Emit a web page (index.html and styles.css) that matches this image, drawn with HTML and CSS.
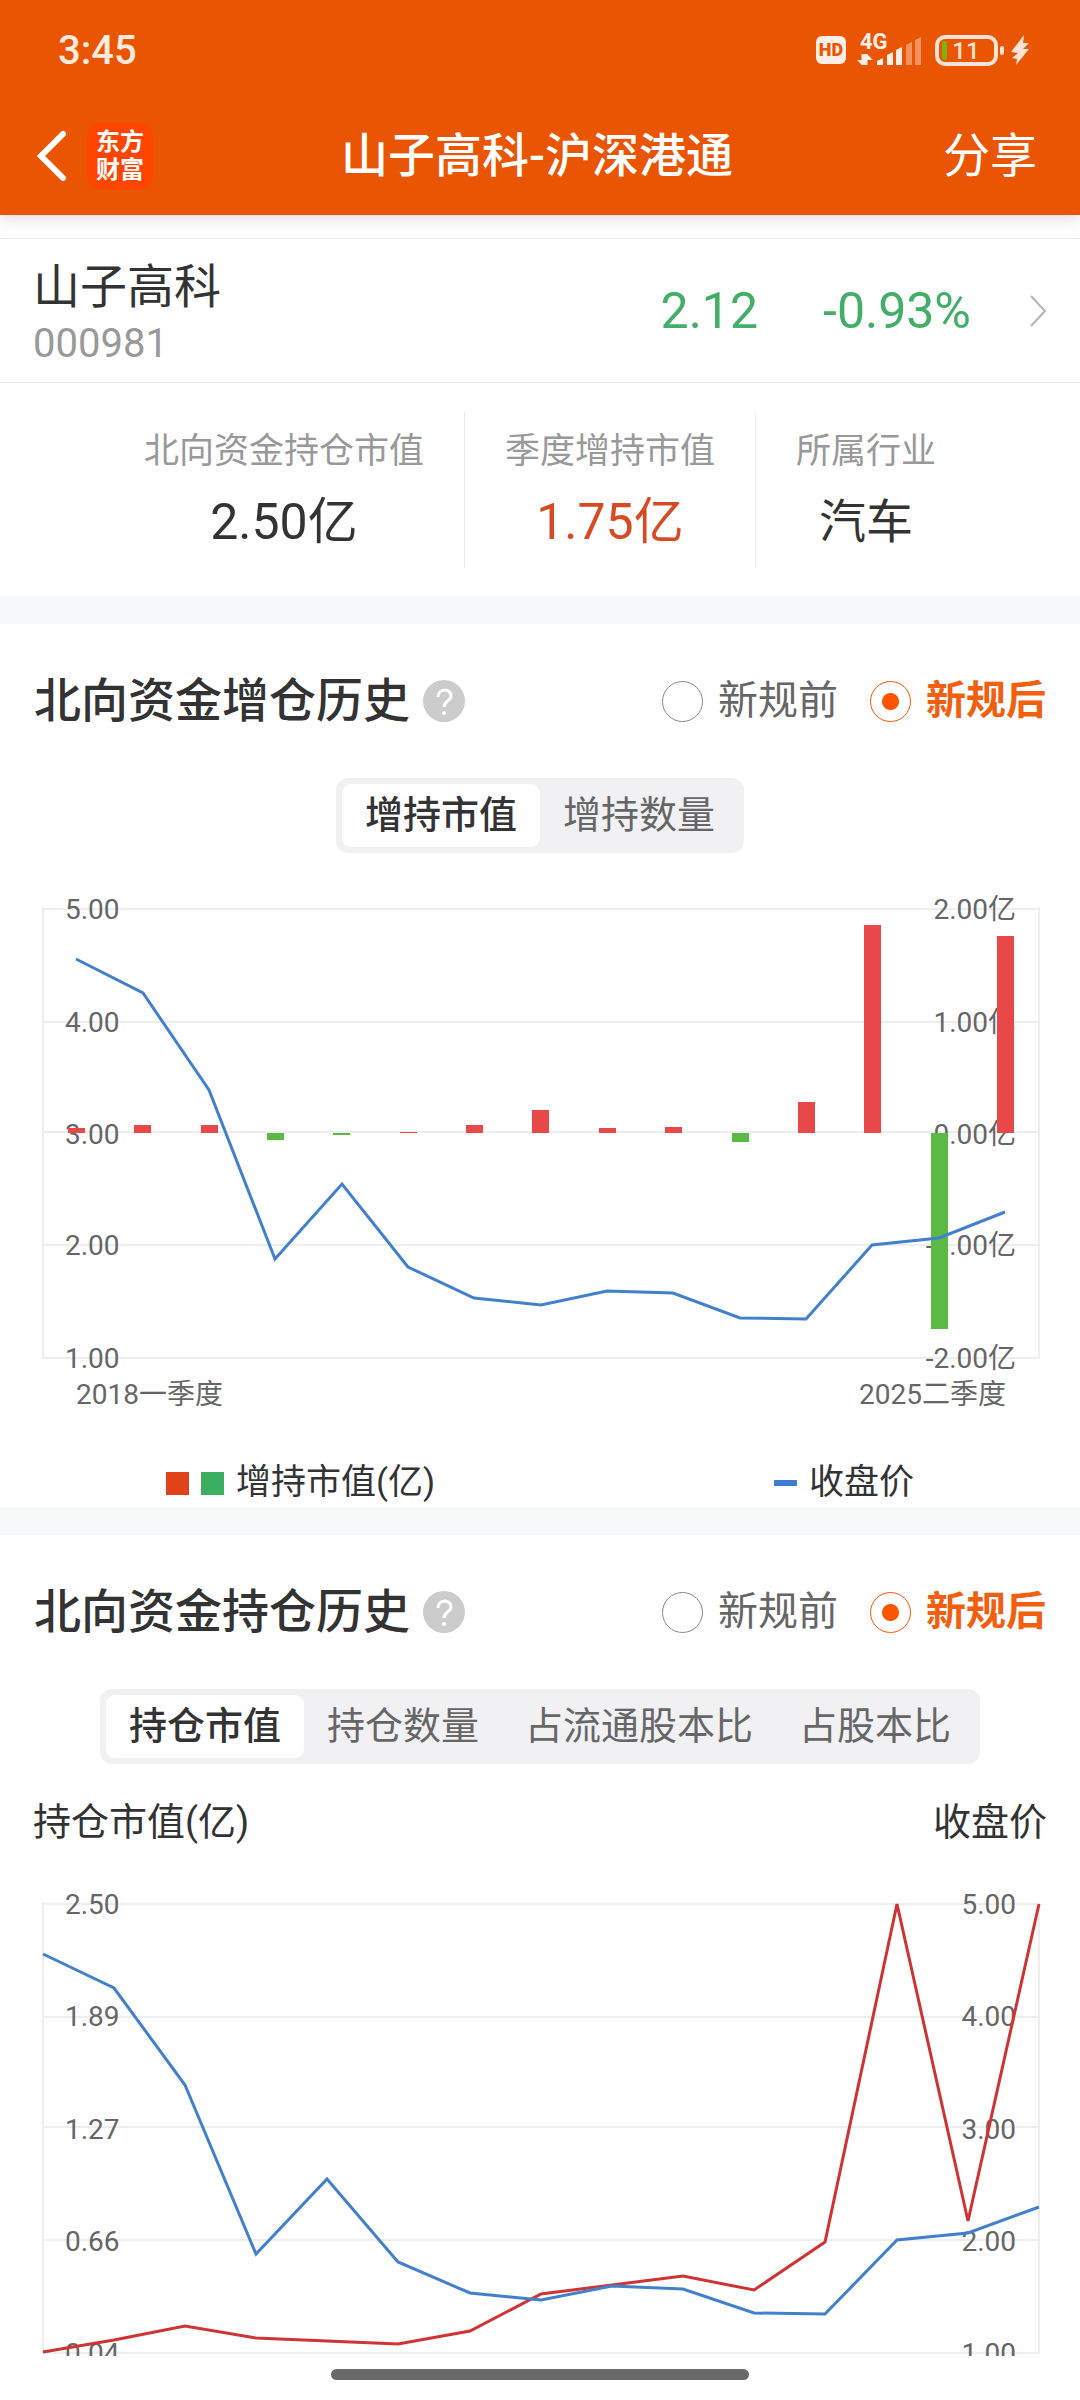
FILE: index.html
```html
<!DOCTYPE html>
<html lang="zh-CN">

<head>
  <meta charset="UTF-8">
  <meta name="viewport" content="width=device-width, initial-scale=1">
  <title>山子高科-沪深港通</title>
  <link rel="stylesheet" href="styles.css">
</head>

<body>
  <header class="top">
    <div class="status-bar">
      <span class="time">3:45</span>
      <svg class="status-icons" width="216" height="52" viewBox="815 24 216 52" aria-hidden="true">
        <rect x="816" y="36" width="30" height="28" rx="6" fill="#ffeee6" />
        <text x="831" y="56" class="hd">HD</text>
        <text x="860" y="49" class="net">4G</text>
        <path d="M863 54v11M866 65V54" fill="none" stroke="#ffeee6" stroke-width="3" />
        <path d="M857 60h5v5zM867 54l6 6h-6z" fill="#ffeee6" />
        <g fill="#ffeee6">
          <path d="M877 61l6-3v7h-6zM887 55l6-3v13h-6zM896 50l6-3v18h-6z" />
          <path d="M906 45l6-3v23h-6zM915 40l6-3v28h-6z" opacity=".4" />
        </g>
        <rect x="937" y="37" width="59" height="27" rx="8" fill="none" stroke="#ffe3d2" stroke-width="4" />
        <rect x="1000" y="46" width="4" height="9" rx="2" fill="#ffe3d2" />
        <rect x="942" y="41" width="5" height="19" rx="2" fill="#7fb010" />
        <text x="966" y="59" class="level">11</text>
        <path d="M1024 35l-13 17 7 1-6 5 5 1-1 6 13-16h-6l6-6h-6z" fill="#ffe3d6" />
      </svg>
    </div>
    <nav class="nav">
      <div class="nav-left">
        <a class="back" href="#" aria-label="返回">
          <svg width="30" height="54" viewBox="0 0 30 54">
            <path d="M26 5L4 27l22 22" fill="none" stroke="#fff" stroke-width="6" stroke-linecap="round" />
          </svg>
        </a>
        <div class="logo">东方<br>财富</div>
      </div>
      <h1>山子高科-沪深港通</h1>
      <button class="share">分享</button>
    </nav>
  </header>

  <main>
    <a class="stock" href="#">
      <div class="stock-id">
        <div class="stock-name">山子高科</div>
        <div class="stock-code">000981</div>
      </div>
      <span class="price">2.12</span>
      <span class="change">-0.93%</span>
      <svg class="chevron" width="18" height="34" viewBox="0 0 18 34">
        <path d="M2 2l14 15L2 32" fill="none" stroke="#b4b4b4" stroke-width="2" />
      </svg>
    </a>

    <div class="summary">
      <div class="item">
        <div class="label">北向资金持仓市值</div>
        <div class="value">2.50亿</div>
      </div>
      <div class="item">
        <div class="label">季度增持市值</div>
        <div class="value up">1.75亿</div>
      </div>
      <div class="item">
        <div class="label">所属行业</div>
        <div class="value word">汽车</div>
      </div>
    </div>

    <section>
      <div class="section-head">
        <h2>北向资金增仓历史</h2>
        <button class="help" aria-label="说明">
          <svg width="43" height="43" viewBox="0 0 43 43">
            <circle cx="21" cy="21" r="21" fill="#ccc" />
            <path d="M15 17c0-9 13-9 13-1 0 5-7 5-7 11" fill="none" stroke="#fff" stroke-width="3" />
            <circle cx="21" cy="33" r="2" fill="#fff" />
          </svg>
        </button>
        <label class="radio"><input type="radio" name="rule-add">新规前</label>
        <label class="radio"><input type="radio" name="rule-add" checked><span>新规后</span></label>
      </div>
      <div class="tabs">
        <button class="active">增持市值</button>
        <button>增持数量</button>
      </div>
      <svg class="chart" viewBox="0 0 1080 606">
        <g class="grid">
          <path d="M43 56H1039M43 169H1039M43 279H1039M43 392H1039M43 505H1039" />
          <path d="M43 54V505M1039 54V505" />
        </g>
        <g class="axis">
          <text x="65" y="66">5.00</text>
          <text x="65" y="179">4.00</text>
          <text x="65" y="291">3.00</text>
          <text x="65" y="402">2.00</text>
          <text x="65" y="515">1.00</text>
        </g>
        <g class="axis end">
          <text x="1016" y="66">2.00亿</text>
          <text x="1016" y="179">1.00亿</text>
          <text x="1016" y="291">0.00亿</text>
          <text x="1016" y="402">-1.00亿</text>
          <text x="1016" y="515">-2.00亿</text>
        </g>
        <g class="axis">
          <text x="76" y="551">2018一季度</text>
          <text class="end" x="1006" y="551">2025二季度</text>
        </g>
        <g class="bar-up">
          <rect x="68" y="275" width="17" height="5" />
          <rect x="134" y="272" width="17" height="8" />
          <rect x="201" y="272" width="17" height="8" />
          <rect x="400" y="279" width="17" height="1" />
          <rect x="466" y="272" width="17" height="8" />
          <rect x="532" y="257" width="17" height="23" />
          <rect x="599" y="275" width="17" height="5" />
          <rect x="665" y="274" width="17" height="6" />
          <rect x="798" y="249" width="17" height="31" />
          <rect x="864" y="72" width="17" height="208" />
          <rect x="997" y="83" width="17" height="197" />
        </g>
        <g class="bar-down">
          <rect x="267" y="280" width="17" height="7" />
          <rect x="333" y="280" width="17" height="2" />
          <rect x="732" y="280" width="17" height="9" />
          <rect x="931" y="280" width="17" height="196" />
        </g>
        <polyline class="line-price" points="76,106 143,140 209,237 275,406 342,331 408,414 474,445 541,452 607,438 673,440 740,465 806,466 872,392 939,385 1005,359" />
      </svg>
      <div class="legend">
        <div class="legend-item">
          <i class="key key-up"></i>
          <i class="key key-down"></i>
          增持市值(亿)
        </div>
        <div class="legend-item">
          <i class="key key-line"></i>
          收盘价
        </div>
      </div>
    </section>

    <section>
      <div class="section-head">
        <h2>北向资金持仓历史</h2>
        <button class="help" aria-label="说明">
          <svg width="43" height="43" viewBox="0 0 43 43">
            <circle cx="21" cy="21" r="21" fill="#ccc" />
            <path d="M15 17c0-9 13-9 13-1 0 5-7 5-7 11" fill="none" stroke="#fff" stroke-width="3" />
            <circle cx="21" cy="33" r="2" fill="#fff" />
          </svg>
        </button>
        <label class="radio"><input type="radio" name="rule-hold">新规前</label>
        <label class="radio"><input type="radio" name="rule-hold" checked><span>新规后</span></label>
      </div>
      <div class="tabs">
        <button class="active">持仓市值</button>
        <button>持仓数量</button>
        <button>占流通股本比</button>
        <button>占股本比</button>
      </div>
      <div class="axis-titles">
        <span>持仓市值(亿)</span>
        <span>收盘价</span>
      </div>
      <svg class="chart" viewBox="0 0 1080 476">
        <g class="grid">
          <path d="M43 24H1039M43 137H1039M43 247H1039M43 360H1039M43 473H1039" />
          <path d="M43 22V473M1039 22V473" />
        </g>
        <g class="axis">
          <text x="65" y="34">2.50</text>
          <text x="65" y="146">1.89</text>
          <text x="65" y="259">1.27</text>
          <text x="65" y="371">0.66</text>
          <text x="65" y="483">0.04</text>
        </g>
        <g class="axis end">
          <text x="1016" y="34">5.00</text>
          <text x="1016" y="146">4.00</text>
          <text x="1016" y="259">3.00</text>
          <text x="1016" y="371">2.00</text>
          <text x="1016" y="483">1.00</text>
        </g>
        <polyline class="line-hold" points="43,472 114,460 185,446 256,458 327,461 398,464 470,451 541,414 612,405 683,396 754,410 825,362 897,24 968,341 1039,24" />
        <polyline class="line-price" points="43,74 114,108 185,205 256,374 327,299 398,382 470,413 541,420 612,406 683,409 754,433 825,434 897,360 968,353 1039,327" />
      </svg>
    </section>
  </main>

  <footer class="home-bar"></footer>
</body>

</html>
```

FILE: styles.css
```css
:root {
  --brand: #ea5504;
  --accent: #ff5500;
  --text: #333;
  --text-mid: #666;
  --text-light: #999;
  --line: #ebebeb;
  --band: #f6f8fa;
}

* {
  box-sizing: border-box;
}

body {
  margin: 0;
  background: #fff;
  color: var(--text);
  font-family: Roboto, "Noto Sans CJK SC", sans-serif;
}

button {
  border: none;
  padding: 0;
  background: none;
  color: inherit;
  font: inherit;
  cursor: pointer;
}

a {
  color: inherit;
  text-decoration: none;
}

h1,
h2 {
  margin: 0;
  font-size: 47px;
  line-height: 60px;
  font-weight: 500;
}

svg {
  display: block;
}

/* header */
.top {
  position: relative;
  padding-bottom: 3px;
  background: var(--brand);
  color: #fff;
  box-shadow: 0 2px 16px rgba(0, 0, 0, .16);
}

.status-bar {
  display: flex;
  align-items: center;
  justify-content: space-between;
  height: 100px;
  padding: 0 49px 0 58px;
}

.time {
  color: #ffeadd;
  font-size: 40px;
  font-weight: 500;
}

.hd {
  fill: var(--brand);
  font-size: 18px;
  font-weight: 900;
  text-anchor: middle;
}

.net {
  fill: #ffeee6;
  font-size: 22px;
  font-weight: 700;
}

.level {
  fill: #ffe3d2;
  font-size: 24px;
  font-weight: 500;
  text-anchor: middle;
}

.nav {
  display: grid;
  grid-template-columns: 1fr auto 1fr;
  align-items: center;
  height: 112px;
  padding: 0 43px 0 37px;
}

.nav-left {
  display: flex;
  align-items: center;
  gap: 20px;
}

.logo {
  width: 66px;
  height: 66px;
  padding-top: 5px;
  border-radius: 14px;
  background: #ff4500;
  font-size: 24px;
  line-height: 28px;
  font-weight: 700;
  text-align: center;
}

.share {
  justify-self: end;
  font-size: 47px;
  line-height: 60px;
}

/* stock row */
.stock {
  display: flex;
  align-items: center;
  margin-top: 23px;
  padding: 5px 33px;
  border-top: 1px solid var(--line);
  border-bottom: 1px solid var(--line);
  color: #42ae68;
  font-size: 50px;
}

.stock-id {
  flex: 1;
  padding: 13px 0 6px;
}

.stock-name {
  color: var(--text);
  font-size: 47px;
  line-height: 60px;
}

.stock-code {
  color: var(--text-light);
  font-size: 40px;
  line-height: 54px;
}

.change {
  margin-left: 65px;
}

.chevron {
  margin-left: 58px;
}

/* summary */
.summary {
  display: flex;
  justify-content: center;
  padding: 29px 0 28px;
}

.item {
  padding: 10px 40px 6px;
  text-align: center;
}

.item + .item {
  border-left: 1px solid var(--line);
}

.label {
  color: var(--text-light);
  font-size: 35px;
  line-height: 60px;
}

.value {
  font-size: 50px;
  line-height: 80px;
}

.word {
  font-size: 47px;
}

.up {
  color: #d64b23;
}

/* sections */
section {
  border-top: 28px solid var(--band);
}

.section-head {
  display: flex;
  align-items: center;
  height: 154px;
  padding: 0 34px;
}

.help {
  margin: 0 auto 0 13px;
}

.radio {
  display: flex;
  align-items: center;
  gap: 15px;
  margin-left: 32px;
  color: var(--text-mid);
  font-size: 40px;
  line-height: 56px;
}

.radio input {
  appearance: none;
  width: 41px;
  height: 41px;
  margin: 0;
  border: 1px solid #888;
  border-radius: 50%;
}

.radio input:checked {
  border-color: var(--accent);
  background: radial-gradient(circle, var(--accent) 8px, transparent 9px);
}

.radio input:checked + span {
  color: #f2600f;
  font-weight: 700;
}

.tabs {
  display: flex;
  width: fit-content;
  margin: 0 auto;
  padding: 6px;
  border-radius: 12px;
  background: #f1f1f4;
  color: var(--text-mid);
  font-size: 38px;
  line-height: 63px;
}

.tabs button {
  padding: 0 23px;
  border-radius: 9px;
}

.tabs .active {
  background: #fff;
  color: var(--text);
  font-weight: 500;
}

.axis-titles {
  display: flex;
  justify-content: space-between;
  padding: 0 33px;
  font-size: 38px;
  line-height: 116px;
}

/* charts */
.chart {
  width: 100%;
}

.grid path {
  fill: none;
  stroke: #eee;
  stroke-width: 2;
}

.axis {
  fill: var(--text-mid);
  font-size: 28px;
}

.end {
  text-anchor: end;
}

.bar-up {
  fill: #e84848;
}

.bar-down {
  fill: #5bb946;
}

.line-price,
.line-hold {
  fill: none;
  stroke: #4280cc;
  stroke-width: 3;
}

.line-hold {
  stroke: #cf3434;
}

.legend {
  display: flex;
  justify-content: space-between;
  padding: 0 166px;
  font-size: 35px;
  line-height: 48px;
}

.legend-item {
  display: flex;
  align-items: center;
  gap: 12px;
}

.key {
  width: 23px;
  height: 23px;
}

.key-up {
  background: #e04318;
}

.key-down {
  background: #3cae62;
}

.key-line {
  height: 6px;
  background: #3d7dd3;
}

/* gesture bar */
.home-bar {
  height: 44px;
  padding-top: 13px;
  background: #fff;
}

.home-bar::before {
  content: "";
  display: block;
  width: 418px;
  height: 11px;
  margin: 0 auto;
  border-radius: 6px;
  background: #696969;
}
```
